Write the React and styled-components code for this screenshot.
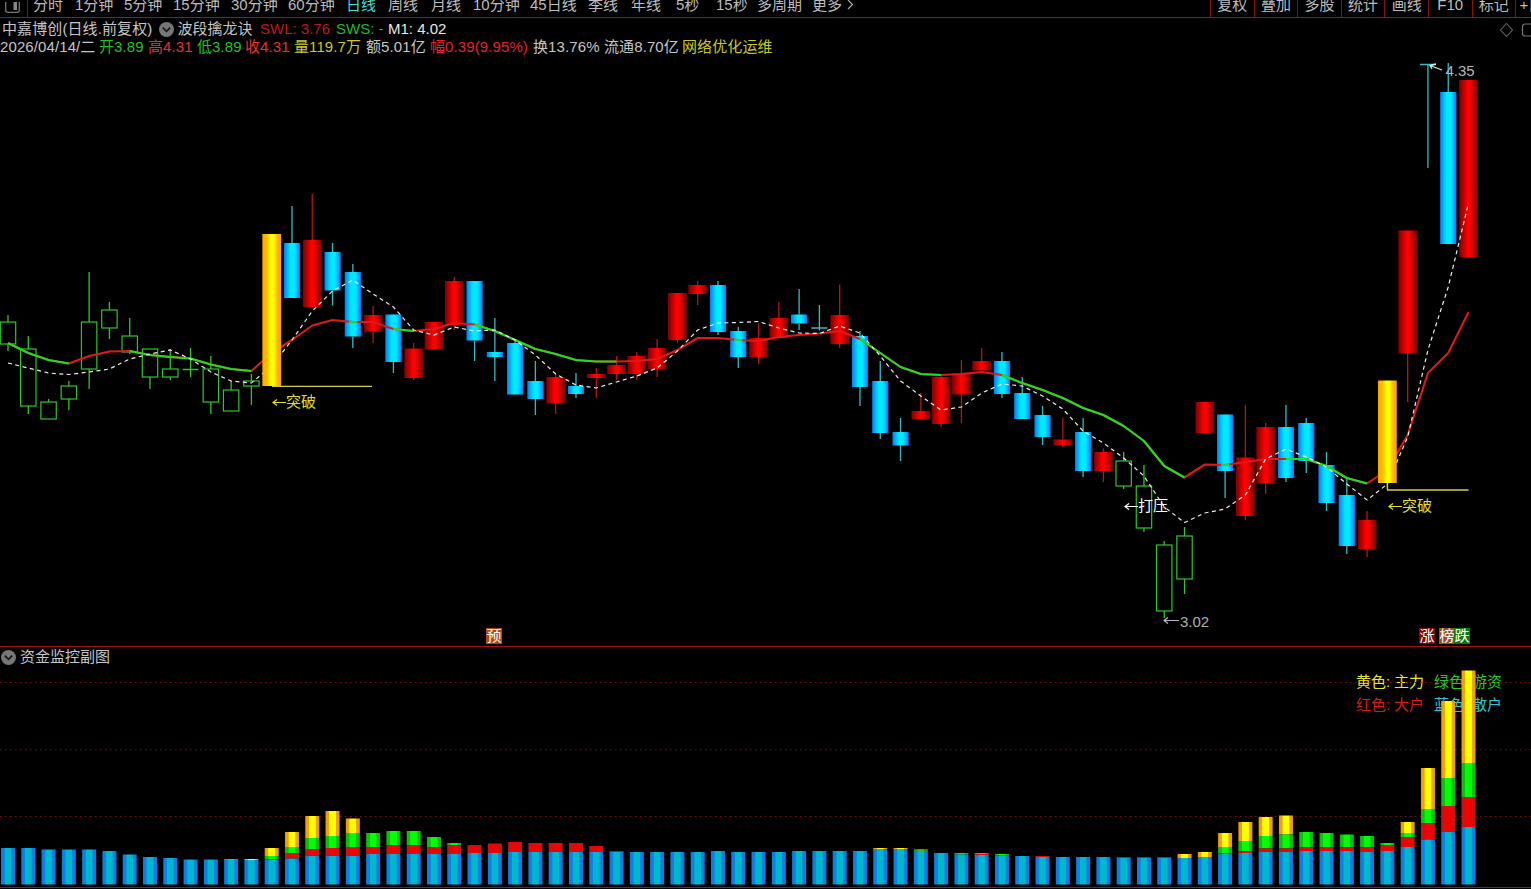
import React from "react";
import styled, { createGlobalStyle } from "styled-components";

const GlobalStyle = createGlobalStyle`
  html, body {
    margin: 0;
    background: #000;
    overflow: hidden;
  }
  * { box-sizing: border-box; }
`;

// distance between two neighbouring candles
const STEP = 20.285;
const cx = (i) => 8 + i * STEP;

const periods = [
  ["分时", 42], ["1分钟", 49], ["5分钟", 49], ["15分钟", 58], ["30分钟", 57],
  ["60分钟", 58], ["日线", 42], ["周线", 43], ["月线", 42], ["10分钟", 57],
  ["45日线", 58], ["季线", 43], ["年线", 45], ["5秒", 40], ["15秒", 41],
  ["多周期", 55], ["更多", 36],
];

const tools = ["复权", "叠加", "多股", "统计", "画线", "F10", "标记"];

const quote = [
  ["2026/04/14/二", 99, "#c6c6c6"],
  ["开3.89", 49, "#22c322"],
  ["高4.31", 49, "#e8303a"],
  ["低3.89", 48, "#22c322"],
  ["收4.31", 49, "#e8303a"],
  ["量119.7万", 72, "#c9c92c"],
  ["额5.01亿", 64, "#c6c6c6"],
  ["幅0.39(9.95%)", 103, "#e8202a"],
  ["换13.76%", 71, "#c6c6c6"],
  ["流通8.70亿", 78, "#c6c6c6"],
  ["网络优化运维", 96, "#c9c92c"],
];

// kind, high, body top, body bottom, low
const candles = [
  ["g", 315, 322, 344, 351], ["g", 336, 349, 406, 414], ["g", 399, 402, 419, 419],
  ["g", 381, 386, 399, 410], ["g", 272, 322, 369, 389], ["g", 302, 310, 328, 339],
  ["g", 318, 336, 352, 354], ["g", 349, 349, 377, 389], ["g", 349, 369, 377, 380],
  ["g", 348, 369, 369, 377], ["g", 356, 369, 402, 414], ["g", 381, 390, 411, 411],
  ["g", 374, 381, 386, 405], ["y", 234, 234, 386, 386], ["b", 206, 243, 298, 298],
  ["r", 194, 240, 307, 307], ["b", 243, 252, 290.5, 305.5], ["b", 264, 272, 336.5, 348],
  ["r", 306, 315, 331.5, 343], ["b", 314, 314.5, 362, 373], ["r", 343, 348.5, 378, 380],
  ["r", 322, 322, 349, 349], ["r", 277, 281, 325, 330], ["b", 281, 281, 340.5, 361],
  ["b", 318, 352, 357, 381], ["b", 340, 343, 394.5, 394.5], ["b", 361, 381, 399, 415],
  ["r", 374, 377, 403, 414], ["b", 373, 386, 394, 398], ["r", 368, 374, 378, 398],
  ["r", 356, 365, 374, 380], ["r", 352, 356, 374, 380], ["r", 339, 348, 369, 377],
  ["r", 293, 293, 340, 343], ["r", 281, 285, 294, 305], ["b", 281, 285, 332, 335],
  ["b", 327, 331, 357, 368], ["r", 323, 338, 357, 364], ["r", 302, 318, 338, 338],
  ["b", 289, 314.5, 323.5, 330], ["b", 305, 327.5, 327.5, 330.5], ["r", 284.5, 315, 344, 348],
  ["b", 331, 336, 387, 406], ["b", 361, 381, 433, 439], ["b", 418, 432, 445.5, 461],
  ["r", 393, 411, 419, 419], ["r", 376, 377, 424, 427], ["r", 360, 374, 394.5, 423],
  ["r", 348, 361, 370.5, 371], ["b", 352, 361, 394, 398], ["b", 377, 393, 419, 419],
  ["b", 406, 415, 437, 445], ["r", 418, 439.5, 445, 447], ["b", 418, 432, 471, 477],
  ["r", 448.5, 452, 471, 482], ["g", 452, 461, 486, 489], ["g", 465, 486, 528, 532],
  ["g", 541, 545, 611, 618], ["g", 527, 536, 579, 594], ["r", 402, 402, 433, 433],
  ["b", 414.5, 414.5, 471, 498], ["r", 405, 457.5, 516, 520], ["r", 423, 427, 483, 494],
  ["b", 405, 427, 478, 482], ["b", 418, 423, 461, 473], ["b", 452, 465, 503, 511],
  ["b", 477, 495, 546, 554], ["r", 511, 520, 549, 557], ["y", 380.5, 380.5, 483, 489],
  ["r", 230.5, 230.5, 353, 402], ["b", 64, 64, 64, 168], ["b", 63, 92, 244, 244],
  ["r", 80, 80, 257, 257],
];

const trend = [
  343, 353, 360, 363.5, 356, 351.5, 351, 355, 357, 358.5, 364.5, 369, 371, 353, 340,
  325.5, 320, 322, 322, 329, 331, 329, 323, 324.5, 331, 340, 349, 354, 360, 361.5,
  361.5, 361, 359, 350, 338, 338, 340, 341, 337, 335, 333.5, 331, 339, 353, 367,
  374, 375, 374, 372, 375, 383, 390, 398, 408, 415, 426, 441, 466, 477.5, 464.5,
  465, 462, 459, 459, 459, 466, 478, 483.5, 470, 435, 373, 353, 312,
];
// [from, to] index ranges where the trend is falling
const falling = [[0, 3], [6, 12], [19, 20], [23, 30], [42, 46], [49, 58], [63, 67]];
const flatTicks = [17, 36, 60];

const average = [
  363, 368, 373, 374.5, 372, 369, 359, 354, 350, 359, 372, 381, 383, 366, 340, 311,
  291, 280, 294, 307, 330, 335, 327, 331, 330, 340, 355, 374, 385, 388, 382, 376,
  368, 351, 330, 323, 322.5, 321.5, 328, 333, 333.5, 326, 333, 356, 381, 396, 410,
  407, 393, 384, 386, 396, 409, 431, 443, 458, 476, 507, 522.5, 513, 509, 495, 459,
  449, 457, 467, 484, 500, 484, 437, 350, 287, 203,
];

// top edges of the yellow, green, red and blue parts
const flows = [
  ...[848, 848, 849.5, 849.5, 849.5, 851, 854.5, 857, 858, 859.5, 859.5].map((y) => [y, y, y, y]),
  [859, 859, 860, 860], [859, 860, 860, 860], [848, 856, 859, 860], [832, 847, 853, 858.5],
  [816, 838, 849, 856], [811, 836, 848, 856], [818.5, 833, 847, 856], [833, 833, 847, 854],
  [831, 831, 845.5, 854], [831, 831, 845.5, 854], [837, 837, 847, 854], [843, 843, 845.5, 854],
  [845, 845, 845, 853], [843.5, 843.5, 843.5, 853], [842, 842, 842, 852], [843, 843, 843, 852],
  [843, 843, 843, 852], [843, 843, 843, 852], [846, 846, 846, 852], [851, 851, 851, 852],
  ...[852, 852, 852, 852, 851, 852, 852, 852, 851, 851, 851, 851].map((y) => [y, y, y, y]),
  [848, 849.5, 850, 850], [848, 849.5, 850, 850], [849.5, 850.5, 851, 851], [853, 853, 853, 853],
  [853, 853, 854.5, 854.5], [853, 853, 854, 855], [854, 854, 855.5, 855.5], [856, 856, 856, 856],
  [856, 856, 856, 857], [857, 857, 857, 857], [857, 857, 857, 857], [857, 857, 857, 857],
  [857, 857, 857, 858], [857, 857, 857, 858], [857, 857, 857, 858], [854, 858, 858, 858],
  [852, 857, 857, 857], [833, 847, 853, 854], [822, 841, 851, 853], [817, 836, 848.5, 852],
  [815.5, 834.5, 848.5, 852], [832, 832, 847.5, 851], [833, 833, 847.5, 851],
  [834.5, 834.5, 847.5, 851], [836, 836, 847.5, 852], [843, 843, 845.5, 851],
  [822, 833, 837, 847], [768, 809, 823, 839.5], [701, 778, 806, 832], [670.5, 763, 797, 827],
];
const FLOW_BASE = 884.5;
const PANEL_TOP = 647;

const Screen = styled.div`
  width: 1531px;
  height: 889px;
  display: flex;
  flex-direction: column;
  overflow: hidden;
  background: #000;
  color: #c6c6c6;
  font-family: "Liberation Sans", "Noto Sans CJK SC", sans-serif;
  font-size: 15px;
  font-weight: 400;
  white-space: nowrap;
`;

const Toolbar = styled.div`
  height: 18px;
  display: flex;
  flex: none;
  border-bottom: 1px solid #a01414;
  overflow: hidden;
`;

const PanelToggle = styled.div`
  width: 28px;
  height: 17px;
  padding-left: 5px;
  margin-right: 5px;
  border-right: 1px solid #8c1010;
`;

const Period = styled.span`
  width: ${(p) => p.$w}px;
  line-height: 20px;
  margin-top: -5px;
  flex: none;
  color: ${(p) => (p.$active ? "#45dcdc" : "#bdbdbd")};
`;

const More = styled.svg`
  width: 7px;
  height: 12px;
  margin-left: -1px;
`;

const Tools = styled.div`
  display: flex;
  width: 321px;
  margin-left: auto;
`;

const Tool = styled.div`
  width: 43.6px;
  flex: none;
  border-left: 1px solid #8c1010;
  line-height: 20px;
  text-align: center;
  color: #bdbdbd;
  text-indent: ${(p) => (p.$cut ? "3px" : "0")};

  span {
    display: block;
    margin-top: -5px;
  }
`;

const MainPanel = styled.div`
  position: relative;
  height: 629px;
  flex: none;
  padding-top: 2px;
  border-bottom: 1px solid #a01414;
`;

const FlowPanel = styled.div`
  position: relative;
  height: 241px;
  flex: none;
  padding-top: 1px;
  border-bottom: 1px solid #a01414;
`;

const Layer = styled.svg`
  position: absolute;
  left: 0;
  top: 0;
`;

const Line = styled.div`
  position: relative;
  display: flex;
  align-items: center;
  height: 18px;
  line-height: 18px;
  padding-left: ${(p) => p.$pad || 0}px;
`;

const Item = styled.span`
  width: ${(p) => p.$w}px;
  flex: none;
  color: ${(p) => p.$color};
  letter-spacing: ${(p) => p.$space || 0}px;
`;

const Chevron = styled.svg`
  width: 15px;
  height: 15px;
  flex: none;
  margin-right: 4px;
`;

const Corner = styled.svg`
  position: absolute;
  right: 0;
  top: 4px;
`;

const Badge = styled.span`
  position: absolute;
  left: ${(p) => p.$x}px;
  top: 610px;
  width: 16px;
  height: 16px;
  line-height: 16px;
  font-size: 15px;
  text-align: center;
  color: #fff;
  background: ${(p) => p.$bg};
`;

const Legend = styled.div`
  position: absolute;
  left: 1356px;
  top: 23px;
  display: grid;
  grid-template-columns: 78px 70px;
  line-height: 23px;
`;

const Key = styled.span`
  color: ${(p) => p.$color};
  letter-spacing: 0.05px;
  word-spacing: -0.5px;
`;

function Collapse() {
  return (
    <Chevron viewBox="0 0 15 15">
      <circle cx="7.5" cy="7.5" r="7.5" fill="#777" />
      <path d="M3.8 5.6 7.5 9.3 11.2 5.6" fill="none" stroke="#161616" strokeWidth="1.7" />
    </Chevron>
  );
}

function Bands({ id, stops }) {
  return (
    <linearGradient id={id}>
      {stops.map(([at, color]) => (
        <stop key={at} offset={at} stopColor={color} />
      ))}
    </linearGradient>
  );
}

const lineColor = { g: "#2fc52f", b: "#38b9c4", r: "#b81414", y: "#d8c84a" };

function Candle({ i, data }) {
  const [kind, high, top, bottom, low] = data;
  const x = cx(i);
  const color = lineColor[kind];
  if (top === bottom) {
    return (
      <g stroke={color} strokeWidth="1.3">
        <path d={`M${x} ${high}V${low}M${x - 8} ${top + 0.5}H${x + 8}`} />
      </g>
    );
  }
  const w = kind === "b" ? 16.2 : kind === "g" ? 15.4 : 18.7;
  return (
    <g>
      <path d={`M${x} ${high}V${top}M${x} ${bottom}V${low}`} stroke={color} strokeWidth="1.3" />
      <rect
        x={x - w / 2}
        y={top}
        width={w}
        height={bottom - top}
        fill={kind === "g" ? "none" : `url(#c-${kind})`}
        stroke={kind === "g" ? color : "none"}
        strokeWidth="1.2"
      />
    </g>
  );
}

const points = (list, from = 0, to = list.length - 1) =>
  list
    .slice(from, to + 1)
    .map((y, n) => `${cx(from + n)},${y}`)
    .join(" ");

function Arrow({ x, y, color, size = 13 }) {
  return (
    <path
      d={`M${x + size} ${y}H${x}M${x + 4} ${y - 3}L${x} ${y}L${x + 4} ${y + 3}`}
      fill="none"
      stroke={color}
      strokeWidth="1.2"
    />
  );
}

function PriceChart() {
  const behind = candles.map((c, i) => [c, i]).filter(([c]) => c[0] !== "y");
  const above = candles.map((c, i) => [c, i]).filter(([c]) => c[0] === "y");
  return (
    <Layer width="1531" height="628" viewBox="0 18 1531 628">
      <defs>
        <Bands id="c-r" stops={[[0, "#7d0000"], [0.25, "#c40000"], [0.45, "#ff0000"], [0.58, "#ff0000"], [0.8, "#b40000"], [1, "#780000"]]} />
        <Bands id="c-b" stops={[[0, "#0878ee"], [0.2, "#02b4ff"], [0.4, "#00eaff"], [0.65, "#00eaff"], [0.85, "#04aaff"], [1, "#0878ee"]]} />
        <Bands id="c-y" stops={[[0, "#ffa800"], [0.25, "#ffbe00"], [0.45, "#ffff00"], [0.6, "#ffff00"], [0.8, "#ffb800"], [1, "#ffa400"]]} />
      </defs>
      {behind.map(([c, i]) => <Candle key={i} i={i} data={c} />)}
      <g fill="none" strokeWidth="2.1" strokeLinejoin="round">
        <polyline points={points(trend)} stroke="#e01818" />
        {falling.map(([a, b]) => (
          <polyline key={a} points={points(trend, a, b)} stroke="#1ee01e" />
        ))}
        {flatTicks.map((i) => (
          <path key={i} d={`M${cx(i) - 4} ${trend[i]}h8`} stroke="#1ed050" />
        ))}
      </g>
      <polyline points={points(average)} fill="none" stroke="#eee" strokeWidth="1.2" strokeDasharray="4 3.5" />
      {above.map(([c, i]) => <Candle key={i} i={i} data={c} />)}

      <path d="M272 386.3H372M1387.5 484V490H1468.5" fill="none" stroke="#d2cc50" strokeWidth="1.3" />
      <Arrow x={273} y={402.5} color="#e2e02c" />
      <text x="286" y="406.5" fill="#e2e02c" textLength="30">突破</text>
      <Arrow x={1389} y={506.5} color="#e2e02c" />
      <text x="1402" y="510.5" fill="#e2e02c" textLength="30">突破</text>
      <Arrow x={1125} y={506.5} color="#fff" />
      <text x="1138" y="510.5" fill="#fff" textLength="30">打压</text>
      <Arrow x={1164} y={620.5} color="#b8b8b8" size={15} />
      <text x="1180" y="627" fill="#b0b0b0" textLength="29">3.02</text>
      <path d="M1442 70L1430 65.5M1436 64L1430 65.5L1432 69" fill="none" stroke="#d8e8e8" strokeWidth="1.3" />
      <text x="1445.5" y="75.5" fill="#b8b8b8" textLength="29">4.35</text>
    </Layer>
  );
}

function FlowChart() {
  return (
    <Layer width="1531" height="240" viewBox={`0 ${PANEL_TOP} 1531 240`}>
      <defs>
        <Bands id="f0" stops={[[0, "#e89a10"], [0.24, "#f0a808"], [0.28, "#ffff00"], [0.72, "#ffff00"], [0.76, "#f0a808"], [1, "#e89a10"]]} />
        <Bands id="f1" stops={[[0, "#12b812"], [0.24, "#10c010"], [0.28, "#00ff00"], [0.72, "#00ff00"], [0.76, "#10c010"], [1, "#12b812"]]} />
        <Bands id="f2" stops={[[0, "#c81414"], [0.24, "#d01010"], [0.28, "#f40000"], [0.72, "#f40000"], [0.76, "#d01010"], [1, "#c81414"]]} />
        <Bands id="f3" stops={[[0, "#1478d8"], [0.24, "#0a84ea"], [0.3, "#00b8cc"], [0.7, "#00b8cc"], [0.76, "#0a84ea"], [1, "#1478d8"]]} />
      </defs>
      {[682.5, 749.8, 816.5].map((y) => (
        <path key={y} d={`M0 ${y}H1531`} stroke="#7c1010" strokeWidth="1.1" strokeDasharray="1.6 3.4" />
      ))}
      {flows.map((tops, i) =>
        tops.map((y, part) => {
          const h = (part < 3 ? tops[part + 1] : FLOW_BASE) - y;
          return h > 0 ? (
            <rect key={`${i}-${part}`} x={cx(i) - 7} y={y} width="14" height={h} fill={`url(#f${part})`} />
          ) : null;
        })
      )}
    </Layer>
  );
}

function App() {
  return (
    <Screen>
      <GlobalStyle />
      <Toolbar>
        <PanelToggle>
          <svg width="16" height="12">
            <path d="M0.7 -2V8.5Q0.7 10.3 2.5 10.3H12.5Q14.3 10.3 14.3 8.5V-2" fill="none" stroke="#777" strokeWidth="1.3" />
            <path d="M8.5 0H12V8H8.5Z" fill="#888" />
          </svg>
        </PanelToggle>
        {periods.map(([name, w]) => (
          <Period key={name} $w={w} $active={name === "日线"}>{name}</Period>
        ))}
        <More viewBox="0 0 7 12">
          <path d="M1 0 5.5 4.5 1 9" fill="none" stroke="#aaa" strokeWidth="1.2" />
        </More>
        <Tools>
          {tools.map((name) => (
            <Tool key={name}><span>{name}</span></Tool>
          ))}
          <Tool $cut><span>+自选</span></Tool>
        </Tools>
      </Toolbar>

      <MainPanel>
        <PriceChart />
        <Line $pad={2}>
          <Item $w={156.5} $color="#c6c6c6" $space={0.1}>中嘉博创(日线.前复权)</Item>
          <Collapse />
          <Item $w={82.5} $color="#c6c6c6">波段擒龙诀</Item>
          <Item $w={76} $color="#c01820">SWL: 3.76</Item>
          <Item $w={52} $color="#22b822">SWS: -</Item>
          <Item $w={80} $color="#e8e8e8">M1: 4.02</Item>
        </Line>
        <Line>
          {quote.map(([text, w, color]) => (
            <Item key={text} $w={w} $color={color} $space={0.1}>{text}</Item>
          ))}
        </Line>
        <Corner width="32" height="16">
          <path d="M7.5 1.5 13.5 8 7.5 14.5 1.5 8Z" fill="none" stroke="#666" strokeWidth="1.1" />
          <rect x="23.5" y="2" width="14" height="12" rx="2.5" fill="none" stroke="#777" strokeWidth="1.2" />
        </Corner>
        <Badge $x={486} $bg="#b04a14">预</Badge>
        <Badge $x={1419} $bg="#7a0808">涨</Badge>
        <Badge $x={1439} $bg="#9a4e1c">榜</Badge>
        <Badge $x={1454} $bg="#0c7a14">跌</Badge>
      </MainPanel>

      <FlowPanel>
        {/* the tall bars run over the legend */}
        <Legend>
          <Key $color="#e8e82c">黄色: 主力</Key>
          <Key $color="#28c828">绿色: 游资</Key>
          <Key $color="#d81c1c">红色: 大户</Key>
          <Key $color="#30c8d8">蓝色: 散户</Key>
        </Legend>
        <FlowChart />
        <Line $pad={1}>
          <Collapse />
          <Item $w={100} $color="#c6c6c6">资金监控副图</Item>
        </Line>
      </FlowPanel>
    </Screen>
  );
}

export default App;
